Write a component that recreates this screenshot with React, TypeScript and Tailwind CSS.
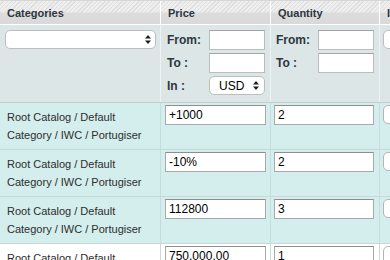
import React from "react";

interface Row {
  category: string[];
  price: string;
  qty: string;
  tinted: boolean;
}

const rows: Row[] = [
  { category: ["Root Catalog / Default", "Category / IWC / Portugiser"], price: "+1000", qty: "2", tinted: true },
  { category: ["Root Catalog / Default", "Category / IWC / Portugiser"], price: "-10%", qty: "2", tinted: true },
  { category: ["Root Catalog / Default", "Category / IWC / Portugiser"], price: "112800", qty: "3", tinted: true },
  { category: ["Root Catalog / Default", "Category / IWC / Portugiser"], price: "750,000.00", qty: "1", tinted: false },
];

function Arrows() {
  return (
    <svg width="6" height="9" viewBox="0 0 6 9" className="shrink-0">
      <path d="M3 0L6 3.5H0Z M0 5.5H6L3 9Z" fill="#1e1e1e" />
    </svg>
  );
}

function TextBox({ value, className }: { value?: string; className: string }) {
  return (
    <div
      className={`h-[20px] bg-white border border-[#a9a9a9] border-t-[#8e8e8e] px-[3px] text-[12px] leading-[18px] text-black ${className}`}
    >
      {value}
    </div>
  );
}

function Label({ children }: { children: React.ReactNode }) {
  return <div className="w-[42px] text-[12px] font-bold text-[#2c3640] leading-[20px]">{children}</div>;
}

export default function App() {
  const head =
    "h-[24px] border-b border-white bg-[linear-gradient(to_bottom,rgba(236,236,236,0)_0,rgba(236,236,236,0)_45%,#dcdcdc_55%,#d9d9d9_100%),repeating-linear-gradient(135deg,#eeeeee_0px,#eeeeee_2px,#dfdfdf_2px,#dfdfdf_3px)] px-[7px] pt-[5px] text-[11px] font-bold text-[#2c3640] leading-[14px] whitespace-nowrap";

  return (
    <div className="w-[390px] h-[260px] overflow-hidden bg-white font-['Liberation_Sans',Arial,Helvetica,sans-serif]">
      <div className="w-[520px] border-t border-[#d6d6d6]">
        {/* headings */}
        <div className="flex">
          <div className={`${head} w-[161px] border-r`}>Categories</div>
          <div className={`${head} w-[110px] border-r`}>Price</div>
          <div className={`${head} w-[109px] border-r`}>Quantity</div>
          <div className={`${head} flex-1 px-[5px]`}>Is Percent</div>
        </div>

        {/* filters */}
        <div className="flex h-[78px] bg-[#dde6e6] border-b border-[#c4cece]">
          <div className="w-[161px] border-r border-[#eef3f3] pl-[5px] pt-[5px]">
            <div className="w-[151px] h-[19px] rounded-[5px] border border-[#bdbdbd] bg-white flex items-center justify-end pr-[4px]">
              <Arrows />
            </div>
          </div>
          <div className="w-[110px] border-r border-[#eef3f3] pl-[6px] pt-[5px] flex flex-col gap-[3px]">
            <div className="flex">
              <Label>From:</Label>
              <TextBox className="w-[56px] border-[#bcbcbc] border-t-[#a5a5a5]" />
            </div>
            <div className="flex">
              <Label>To :</Label>
              <TextBox className="w-[56px] border-[#bcbcbc] border-t-[#a5a5a5]" />
            </div>
            <div className="flex">
              <Label>In :</Label>
              <div className="w-[56px] h-[19px] rounded-[5px] border border-[#bdbdbd] bg-white flex items-center pl-[9px] pr-[5px] text-[12px] text-black">
                <span className="flex-1">USD</span>
                <Arrows />
              </div>
            </div>
          </div>
          <div className="w-[109px] border-r border-[#eef3f3] pl-[5px] pt-[5px] flex flex-col gap-[3px]">
            <div className="flex">
              <Label>From:</Label>
              <TextBox className="w-[56px] border-[#bcbcbc] border-t-[#a5a5a5]" />
            </div>
            <div className="flex">
              <Label>To :</Label>
              <TextBox className="w-[56px] border-[#bcbcbc] border-t-[#a5a5a5]" />
            </div>
          </div>
          <div className="flex-1 pl-[3px] pt-[5px]">
            <div className="w-[60px] h-[19px] rounded-[5px] border border-[#bdbdbd] bg-white" />
          </div>
        </div>

        {/* data rows */}
        {rows.map((row, i) => (
          <div
            key={i}
            className={`flex h-[47px] border-b border-[#c6d9d9] ${row.tinted ? "bg-[#d4eded]" : "bg-white"}`}
          >
            <div className="w-[161px] border-r border-[#c9dcdc] pl-[7px] pt-[5px] text-[11px] leading-[18px] text-[#2e2e2e]">
              {row.category.map((line) => (
                <div key={line} className="whitespace-nowrap">
                  {line}
                </div>
              ))}
            </div>
            <div className="w-[110px] border-r border-[#c9dcdc] pl-[4px] pt-[2px]">
              <TextBox value={row.price} className="w-[101px]" />
            </div>
            <div className="w-[109px] border-r border-[#c9dcdc] pl-[3px] pt-[2px]">
              <TextBox value={row.qty} className="w-[100px]" />
            </div>
            <div className="flex-1 pl-[3px] pt-[2px]">
              <div className="w-[60px] h-[19px] rounded-[5px] border border-[#b5b5b5] bg-white" />
            </div>
          </div>
        ))}
      </div>
    </div>
  );
}
